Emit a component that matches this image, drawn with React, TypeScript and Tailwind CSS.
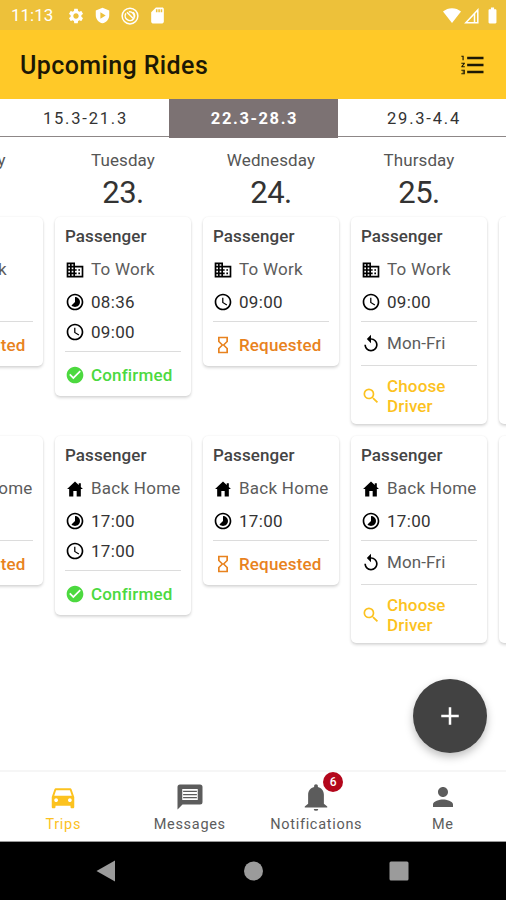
import {
  MdAccessTime,
  MdAdd,
  MdBatteryFull,
  MdCheckCircle,
  MdDirectionsCar,
  MdDomain,
  MdFormatListNumbered,
  MdHourglassEmpty,
  MdPerson,
  MdReplay,
  MdSdCard,
  MdSearch,
  MdSettings,
  MdTimelapse,
} from 'react-icons/md';

type Status = 'confirmed' | 'requested' | 'choose';

interface Trip {
  direction: 'work' | 'home';
  pickup?: string;
  arrival?: string;
  repeat?: string;
  status: Status;
}

interface Day {
  name: string;
  date: string;
  trips: Trip[];
}

interface IconProps {
  size: number;
  className?: string;
}

const days: Day[] = [
  {
    name: 'Monday',
    date: '22.',
    trips: [
      { direction: 'work', arrival: '09:00', status: 'requested' },
      { direction: 'home', pickup: '17:00', status: 'requested' },
    ],
  },
  {
    name: 'Tuesday',
    date: '23.',
    trips: [
      { direction: 'work', pickup: '08:36', arrival: '09:00', status: 'confirmed' },
      { direction: 'home', pickup: '17:00', arrival: '17:00', status: 'confirmed' },
    ],
  },
  {
    name: 'Wednesday',
    date: '24.',
    trips: [
      { direction: 'work', arrival: '09:00', status: 'requested' },
      { direction: 'home', pickup: '17:00', status: 'requested' },
    ],
  },
  {
    name: 'Thursday',
    date: '25.',
    trips: [
      { direction: 'work', arrival: '09:00', repeat: 'Mon-Fri', status: 'choose' },
      { direction: 'home', pickup: '17:00', repeat: 'Mon-Fri', status: 'choose' },
    ],
  },
  {
    name: 'Friday',
    date: '26.',
    trips: [
      { direction: 'work', arrival: '09:00', repeat: 'Mon-Fri', status: 'choose' },
      { direction: 'home', pickup: '17:00', repeat: 'Mon-Fri', status: 'choose' },
    ],
  },
];

const statuses = {
  confirmed: { label: 'Confirmed', icon: MdCheckCircle, color: 'text-[#4cd93f]', height: 'h-[45px]' },
  requested: { label: 'Requested', icon: MdHourglassEmpty, color: 'text-[#e8821e]', height: 'h-[45px]' },
  choose: { label: 'Choose Driver', icon: MdSearch, color: 'text-[#fcc21f]', height: 'h-[59px]' },
};

const HomeIcon = ({ size, className }: IconProps) => (
  <svg width={size} height={size} viewBox="0 0 24 24" fill="currentColor" className={className}>
    <path d="M2.500 12 12 3l4.500 4.200V5H19v4.600l2.500 2.400H19v9h-5v-6.500h-4V21H5v-9z" />
  </svg>
);

const MessageIcon = ({ size }: IconProps) => (
  <svg width={size} height={size} viewBox="0 0 24 24" fill="currentColor">
    <path
      fillRule="evenodd"
      d="M4 2h16a2 2 0 0 1 2 2v12a2 2 0 0 1-2 2H6l-4 4V4a2 2 0 0 1 2-2zm1.800 3.600v8.800h12.400V5.600z"
    />
    <path d="M6.500 7h11v1h-11zM6.500 9.500h11v1h-11zM6.500 12h11v1h-11z" />
  </svg>
);

const BellIcon = ({ size }: IconProps) => (
  <svg width={size} height={size} viewBox="0 0 24 24" fill="currentColor">
    <path d="M12 1.800c.9 0 1.500.6 1.500 1.500v.6c2.900.7 4.800 3.100 4.800 6.200v7.200l2.700 2.200v.8H3v-.8l2.700-2.200v-7.200c0-3.100 1.900-5.500 4.800-6.200v-.6c0-.9.600-1.500 1.500-1.500zM10.200 21.500h3.600a1.800 1.500 0 0 1-3.600 0z" />
  </svg>
);

const StatusBar = () => (
  <div className="flex h-[30px] shrink-0 items-center bg-[#edc13a] pt-px pr-1 pl-[11px] text-white">
    <span className="w-[56px] text-[17px]">11:13</span>
    <MdSettings size={18} />
    <svg width="17" height="17" viewBox="0 0 24 24" className="ml-[9px]">
      <path fill="currentColor" fillRule="evenodd" d="M12 1 2.500 5v6.500C2.500 17 6.500 21.700 12 23c5.500-1.300 9.500-6 9.500-11.500V5zM9 7.500l7.500 4.500L9 16.500z" />
    </svg>
    <svg width="18" height="18" viewBox="0 0 24 24" className="ml-[10px]" fill="none" stroke="currentColor" strokeWidth="2">
      <circle cx="12" cy="12" r="10.500" />
      <path d="M6.500 8.500a6.300 6.300 0 1 0 9.500-1.500M8 7l9 9M10.500 6.500a6 6 0 0 1 7 7" />
    </svg>
    <MdSdCard size={19} className="ml-[9px]" />
    <svg width="18" height="15" viewBox="0 0 18 15" className="ml-auto">
      <path fill="currentColor" d="M0 3.500C5-1 13-1 18 3.500L9 15z" />
    </svg>
    <svg width="15" height="16" viewBox="0 0 15 16" className="ml-[3px]" fill="none" stroke="currentColor">
      <path strokeWidth="1.500" d="M1.800 14.800 13.800 2v12.800z" />
      <path strokeWidth="1.500" d="M10.500 6v9" />
    </svg>
    <MdBatteryFull size={19} className="ml-[4px]" />
  </div>
);

const TripCard = ({ trip }: { trip: Trip }) => {
  const status = statuses[trip.status];
  const StatusIcon = status.icon;
  const DirectionIcon = trip.direction === 'work' ? MdDomain : HomeIcon;

  return (
    <div className="rounded-[5px] bg-white px-[10px] shadow-[0_2px_3px_rgba(0,0,0,0.15),0_0_2px_rgba(0,0,0,0.08)]">
      <h3 className="flex h-[37px] items-center pt-[3px] text-[17px] font-medium tracking-[0.1px] text-[#444]">Passenger</h3>
      <div className="flex h-[31px] items-center gap-[6px]">
        <DirectionIcon size={20} className="shrink-0" />
        <span className="text-[17px] tracking-[0.25px] whitespace-nowrap text-[#5c5c5c]">
          {trip.direction === 'work' ? 'To Work' : 'Back Home'}
        </span>
      </div>
      <div className="pt-[2px] pb-1">
        {trip.pickup && (
          <div className="flex h-[30px] items-center gap-[6px]">
            <MdTimelapse size={20} />
            <span className="pt-px text-[17px] tracking-[0.3px] text-[#333]">{trip.pickup}</span>
          </div>
        )}
        {trip.arrival && (
          <div className="flex h-[30px] items-center gap-[6px]">
            <MdAccessTime size={20} />
            <span className="pt-px text-[17px] tracking-[0.3px] text-[#333]">{trip.arrival}</span>
          </div>
        )}
      </div>
      {trip.repeat && (
        <div className="flex h-11 items-center gap-[6px] border-t border-[#dcdcdc]">
          <MdReplay size={20} />
          <span className="text-[17px] tracking-[0.1px] text-[#5c5c5c]">{trip.repeat}</span>
        </div>
      )}
      <div className={`flex items-center gap-[6px] border-t border-[#dcdcdc] pt-0.5 ${status.height} ${status.color}`}>
        <StatusIcon size={20} className="shrink-0" />
        <span className="text-[17px] leading-5 font-medium tracking-[0.15px]">{status.label}</span>
      </div>
    </div>
  );
};

const tabs = [
  { label: 'Trips', icon: MdDirectionsCar, active: true },
  { label: 'Messages', icon: MessageIcon },
  { label: 'Notifications', icon: BellIcon, badge: 6 },
  { label: 'Me', icon: MdPerson },
];

export default function App() {
  return (
    <div className="relative flex h-[900px] w-[506px] flex-col overflow-hidden bg-white font-[Roboto,sans-serif]">
      <StatusBar />

      <header className="flex h-[69px] shrink-0 items-center justify-between bg-[#ffc928] pr-[19px] pl-5 text-[#1c1805]">
        <h1 className="pt-[3px] text-[25px] font-medium tracking-[0.4px]">Upcoming Rides</h1>
        <MdFormatListNumbered size={28} />
      </header>

      <div className="grid h-[38px] shrink-0 grid-cols-[169px_169px_168px] border-b border-[#8d8787] text-center text-[16.5px] leading-[39px] tracking-[1.8px] text-[#333]">
        <div className="pl-0.5">15.3-21.3</div>
        <div className="bg-[#7c7273] pl-0.5 font-bold tracking-[1.6px] text-white">22.3-28.3</div>
        <div className="pl-1">29.3-4.4</div>
      </div>

      <main className="-ml-[93px] grid w-[728px] flex-1 grid-cols-[repeat(5,136px)] gap-x-3 overflow-hidden">
        {days.map((day) => (
          <section key={day.name}>
            <div className="flex h-20 flex-col items-center">
              <span className="mt-3 text-[17px] leading-[23px] tracking-[0.1px] text-[#555]">{day.name}</span>
              <span className="mt-[3px] text-[31px] leading-9 tracking-[-0.5px] text-[#333]">{day.date}</span>
            </div>
            {day.trips.map((trip) => (
              <div key={trip.direction} className="h-[219px]">
                <TripCard trip={trip} />
              </div>
            ))}
          </section>
        ))}
      </main>

      {/* floating action button */}
      <button className="absolute top-[679px] left-[413px] flex h-[74px] w-[74px] items-center justify-center rounded-full bg-[#424242] text-white shadow-[0_4px_8px_rgba(0,0,0,0.25)]">
        <MdAdd size={30} />
      </button>

      <nav className="grid h-[72px] shrink-0 grid-cols-4 border-t-2 border-b border-t-[#f6f6f6] border-b-[#999]">
        {tabs.map(({ label, icon: Icon, badge, active }) => (
          <div
            key={label}
            className={`flex flex-col items-center pt-[10px] ${active ? 'text-[#fcc21f]' : 'text-[#5c5c5c]'}`}
          >
            <div className="relative">
              <Icon size={30} />
              {badge && (
                <span className="absolute -top-[10px] left-[22px] flex h-5 w-5 items-center justify-center rounded-full bg-[#b3061b] text-[12px] font-medium text-white">
                  {badge}
                </span>
              )}
            </div>
            <span className="mt-[3px] text-[14.5px] leading-5 tracking-[0.7px]">{label}</span>
          </div>
        ))}
      </nav>

      <div className="flex h-[58px] shrink-0 items-center bg-black text-[#9b9b9b]">
        <svg width="506" height="58" viewBox="0 0 506 58" fill="currentColor">
          <path d="M96.500 29 115 18.500v21z" />
          <circle cx="253.500" cy="29" r="9.500" />
          <rect x="389.500" y="19.500" width="19" height="19" rx="1.500" />
        </svg>
      </div>
    </div>
  );
}
